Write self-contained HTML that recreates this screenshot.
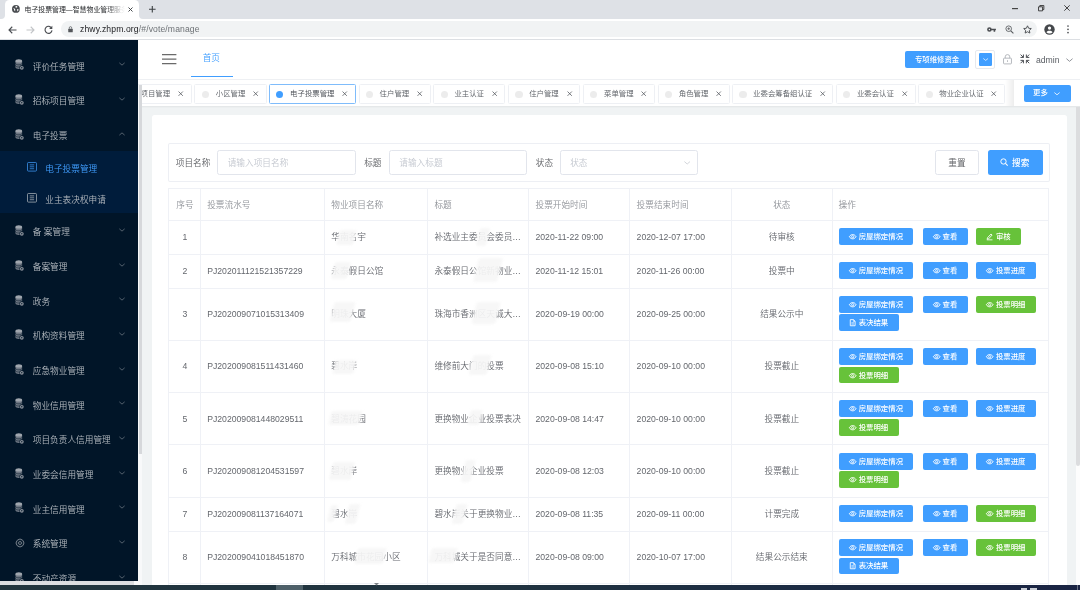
<!DOCTYPE html>
<html lang="zh-CN">
<head>
<meta charset="utf-8">
<title>电子投票管理—智慧物业管理服务平台</title>
<style>
*{box-sizing:border-box;margin:0;padding:0}
html,body{width:1080px;height:590px;overflow:hidden}
body{position:relative;background:#f0f3f4;font-family:"Liberation Sans","Noto Sans CJK SC",sans-serif;color:#606266;font-weight:350;-webkit-font-smoothing:antialiased}
#root{position:absolute;left:0;top:0;width:1080px;height:590px;will-change:transform}
.abs{position:absolute}
svg{display:block;overflow:visible}
/* ---------- browser chrome ---------- */
#tabstrip{position:absolute;left:0;top:0;width:1080px;height:19px;background:#dee1e6}
#tab{position:absolute;left:4.5px;top:0;width:134.5px;height:19px;background:#fff;border-radius:4.5px 4.5px 0 0}
#tab .title{position:absolute;left:20px;top:3.6px;width:100px;height:12px;font-size:6.9px;line-height:12px;color:#26282b;font-weight:400;white-space:nowrap;overflow:hidden}
#tab .fade{position:absolute;left:100px;top:2px;width:20px;height:15px;background:linear-gradient(90deg,rgba(255,255,255,0),#fff)}
#toolbar{position:absolute;left:0;top:18.5px;width:1080px;height:21px;background:#fff;border-bottom:1px solid #dcdfe3}
#omni{position:absolute;left:61px;top:2.6px;width:976px;height:16px;border-radius:8px;background:#f1f3f4}
#url{position:absolute;left:80px;top:3.5px;font-size:8.6px;line-height:14px;color:#202124;white-space:nowrap;letter-spacing:0.12px;font-weight:400}
#url span{color:#6d7175}
/* ---------- sidebar ---------- */
#side{position:absolute;left:0;top:39.5px;width:138.3px;height:541.7px;background:#011528;overflow:hidden}
#side .it{position:absolute;left:0;width:138.3px;height:34.65px;color:#b4bac0;font-size:8.66px;line-height:34.65px;white-space:nowrap}
#side .it .tx{position:absolute;left:32.8px;top:1.8px}
#side .it .ic{position:absolute;left:15.2px;top:11.5px;width:9.2px;height:11.4px}
#side .it .ar{position:absolute;left:119.2px;top:14.4px;width:6px;height:4px}
#side .sub{position:absolute;left:0;top:111.8px;width:138.3px;height:61.7px;background:#001c3b}
#side .si{position:absolute;left:0;width:138.3px;height:30.94px;line-height:30.94px;font-size:8.66px;color:#b4bac0;white-space:nowrap}
#side .si .tx{position:absolute;left:45.3px;top:2px}
#side .si .ic{position:absolute;left:27px;top:10.3px;width:10px;height:9.6px}
#side .si.on{color:#409eff}
/* ---------- header ---------- */
#head{position:absolute;left:138.3px;top:39.5px;width:941.7px;height:40.5px;background:#fff;border-bottom:1px solid #eef0f3}
#tags{position:absolute;left:138.3px;top:80px;width:941.7px;height:25.7px;background:#fff;overflow:hidden}
.tag{position:absolute;top:4.4px;height:19.2px;border:1px solid #eef0f4;border-radius:1.5px;background:#fff;font-size:7.4px;line-height:17.6px;color:#5c6066;white-space:nowrap}
.tag .dot{position:absolute;left:6.3px;top:5.4px;width:7.2px;height:7.2px;border-radius:50%;background:#ececec}
.tag .tx{position:absolute;left:20px;top:-0.6px}
.tag .x{position:absolute;right:7.3px;top:6.1px;width:5.4px;height:5.4px}
.tag.on{border-color:#7fbcfb;color:#4a4e55}
.tag.on .dot{background:#409eff}
.tag.on .tx{left:20.5px}
.btn{position:absolute;background:#409eff;color:#fff;border-radius:2px;white-space:nowrap;text-align:center;font-weight:500}

/* ---------- main ---------- */
#card{position:absolute;left:152.2px;top:115.2px;width:914.8px;height:480px;background:#fff;border-radius:2.5px}
#sbox{position:absolute;left:168px;top:143px;width:882px;height:39px;box-shadow:inset 0 0 0 1px #edeff4;border-radius:2px;background:#fff}
#sbox .lb{position:absolute;top:12.8px;font-size:8.66px;line-height:14px;color:#606266;white-space:nowrap}
#sbox .inp{position:absolute;top:6.8px;height:25.1px;border:1px solid #e2e5ec;border-radius:2.5px;background:#fff}
#sbox .inp span{position:absolute;left:9.4px;top:5.1px;font-size:8.66px;line-height:14px;color:#c4c8d0;white-space:nowrap}
#sbox .wbtn{position:absolute;top:6.8px;height:25.1px;border:1px solid #e2e5ec;border-radius:2.5px;background:#fff;font-size:8.66px;line-height:25px;text-align:center;color:#606266}
#sbox .sbtn{top:6.8px;height:25.1px;font-size:8.66px;line-height:26.2px;border-radius:2.5px;text-align:left}
#tbl{position:absolute;left:168.1px;top:187.3px;width:881px;height:400px;font-size:8.66px}
#tbl .vl{position:absolute;top:0.7px;width:1px;height:400px;background:#eff1f6}
#tbl .hl{position:absolute;left:0;width:881px;height:1px;background:#eff1f6}
#tbl .th{position:absolute;line-height:14px;color:#909399;white-space:nowrap}
#tbl .td{position:absolute;line-height:14px;color:#64676d;white-space:nowrap;overflow:hidden}
#tbl .c{text-align:center}
.ob{position:absolute;border-radius:2px;color:#fff;font-size:7.4px;white-space:nowrap;font-weight:500}
.ob.b{background:#409eff}
.ob.g{background:#67c23a}
.ob .oi{position:absolute;left:10px;top:4.9px;width:7.4px;height:7.4px}
.ob span{position:absolute;left:19.9px;top:0.9px}
#tbl .sm{position:absolute;background:rgba(246,246,246,0.93);filter:blur(0.9px);transform:skewX(-14deg);border-radius:2px}
#task{position:absolute;left:0;top:585px;width:1080px;height:5px;background:linear-gradient(90deg,#21353e 0%,#20333f 45%,#1b2a44 80%,#1a2443 100%)}
</style>
</head>
<body>
<div id="root">
<!-- ================= browser chrome ================= -->
<div id="tabstrip">
  <div class="abs" style="left:0;top:14.500px;width:4.500px;height:4.500px;background:#fff"></div><div class="abs" style="left:0;top:14.500px;width:4.500px;height:4.500px;background:#dee1e6;border-radius:0 0 4px 0"></div><div class="abs" style="left:139px;top:14.500px;width:4.500px;height:4.500px;background:#fff"></div><div class="abs" style="left:139px;top:14.500px;width:4.500px;height:4.500px;background:#dee1e6;border-radius:0 0 0 4px"></div>
  <div id="tab">
    <svg class="abs" style="left:7.1px;top:5.4px" width="7.8" height="7.8" viewBox="0 0 16 16"><circle cx="8" cy="8" r="8" fill="#4a4d51"/><path d="M2.2 6.2l3.2 1.2 1.4 2.2-.6 3.4-1.8-2.2-.4-2.4zM7.6 1.6l3 1 .4 2-2.4 1.2-1.6-1.4zM10.6 8.4l2.8.4-.8 3.4-1.8.6z" fill="#fff"/></svg>
    <div class="title">电子投票管理—智慧物业管理服务平台</div>
    <div class="fade"></div>
    <svg class="abs" style="left:123.4px;top:6.8px" width="5" height="5" viewBox="0 0 10 10"><path d="M1 1l8 8M9 1l-8 8" stroke="#3c4043" stroke-width="1.9" fill="none"/></svg>
  </div>
  <svg class="abs" style="left:148.6px;top:6px" width="6.6" height="6.6" viewBox="0 0 12 12"><path d="M6 0v12M0 6h12" stroke="#3c4043" stroke-width="2" fill="none"/></svg>
  <!-- window controls -->
  <svg class="abs" style="left:1011.5px;top:8px" width="6" height="1.2" viewBox="0 0 6 1.2"><rect width="6" height="1.2" fill="#444"/></svg>
  <svg class="abs" style="left:1038px;top:5.4px" width="6.4" height="6.4" viewBox="0 0 12 12"><path d="M1 3.4h7.6V11H1zM3.4 3.2V1H11v7.6H8.8" stroke="#333" stroke-width="1.7" fill="none"/></svg>
  <svg class="abs" style="left:1064px;top:5.4px" width="6" height="6" viewBox="0 0 10 10"><path d="M0.5 0.5l9 9M9.5 0.5l-9 9" stroke="#333" stroke-width="1.5" fill="none"/></svg>
</div>
<div id="toolbar">
  <!-- back / forward / reload -->
  <svg class="abs" style="left:7.8px;top:7px" width="9" height="8" viewBox="0 0 18 16"><path d="M17 8H2.5M8.5 1.5L2 8l6.5 6.5" stroke="#4b4e52" stroke-width="2.2" fill="none"/></svg>
  <svg class="abs" style="left:25.6px;top:7px" width="9" height="8" viewBox="0 0 18 16"><path d="M1 8h14.5M9.5 1.5L16 8l-6.5 6.5" stroke="#c3c5c8" stroke-width="2.2" fill="none"/></svg>
  <svg class="abs" style="left:44.2px;top:6.4px" width="9" height="9" viewBox="0 0 18 18"><path d="M15.2 6.2A7 7 0 1 0 16 10.6" stroke="#4b4e52" stroke-width="2.3" fill="none"/><path d="M16.6 1.4v6.4h-6.4z" fill="#4b4e52"/></svg>
  <div id="omni"></div>
  <svg class="abs" style="left:68.2px;top:7.2px" width="5" height="6.6" viewBox="0 0 10 13"><rect x="0.5" y="5.2" width="9" height="7.4" rx="1" fill="#54575b"/><path d="M2.6 5.4V3.6a2.4 2.4 0 0 1 4.8 0v1.8" stroke="#54575b" stroke-width="1.5" fill="none"/></svg>
  <div id="url">zhwy.zhpm.org<span>/#/vote/manage</span></div>
  <!-- right icons -->
  <svg class="abs" style="left:986.6px;top:8.2px" width="9" height="5" viewBox="0 0 18 10"><circle cx="4.800" cy="5" r="3" stroke="#4b4e52" stroke-width="3.200" fill="none"/><path d="M8 3.400h9.800v3.200H16.400v3h-3.200v-3H8z" fill="#4b4e52"/></svg>
  <svg class="abs" style="left:1004.6px;top:6.4px" width="9" height="9" viewBox="0 0 18 18"><circle cx="7.4" cy="7.4" r="5.6" stroke="#55585c" stroke-width="1.7" fill="none"/><path d="M11.6 11.6l5.2 5.2" stroke="#55585c" stroke-width="2.2"/><path d="M4.6 7.4h5.6M7.4 4.6v5.6" stroke="#55585c" stroke-width="1.5"/></svg>
  <svg class="abs" style="left:1022.6px;top:6.2px" width="9" height="9" viewBox="0 0 18 18"><path d="M9 1.6l2.3 4.9 5.3.6-3.9 3.7 1 5.3L9 13.5l-4.7 2.6 1-5.3L1.4 7.1l5.3-.6z" stroke="#4b4e52" stroke-width="1.9" fill="none" stroke-linejoin="round"/></svg>
  <svg class="abs" style="left:1044.4px;top:5.3px" width="11" height="11" viewBox="0 0 22 22"><circle cx="11" cy="11" r="10.400" fill="#45484c"/><circle cx="11" cy="8.200" r="3.300" fill="#fff"/><path d="M4.800 16.400c1.600-2.200 3.800-3 6.200-3s4.600.8 6.200 3A8 8 0 0 1 11 19.200a8 8 0 0 1-6.200-2.800z" fill="#fff"/></svg>
  <svg class="abs" style="left:1067px;top:6.6px" width="2" height="8.6" viewBox="0 0 2 8.6"><circle cx="1" cy="1" r="0.85" fill="#4b4e52"/><circle cx="1" cy="4.3" r="0.85" fill="#4b4e52"/><circle cx="1" cy="7.6" r="0.85" fill="#4b4e52"/></svg>
</div>

<!-- ================= sidebar ================= -->
<div id="side">
  <div class="it" style="top:8.4px"><svg class="ic" viewBox="0 0 17 21"><path d="M0.800 3.600v11.800c0 1.700 2.800 3 6.200 3s6.200-1.300 6.200-3V3.600z" fill="#6f7884"/><path d="M0.800 7.900c0 1.600 2.800 2.900 6.200 2.900s6.200-1.300 6.200-2.900M0.800 11.900c0 1.600 2.800 2.900 6.200 2.900s6.200-1.300 6.200-2.900" stroke="#011528" stroke-width="1" fill="none"/><ellipse cx="7" cy="3.600" rx="6.200" ry="3" fill="#a0a6ae"/><circle cx="12.600" cy="16.200" r="4.500" fill="#011528"/><circle cx="12.600" cy="16.200" r="3.500" fill="#8c939c"/><circle cx="12.600" cy="16.200" r="1.300" fill="#011528"/></svg><span class="tx">评价任务管理</span><svg class="ar" viewBox="0 0 10 5"><path d="M0.600 0.600L5 4.400 9.400 0.600" stroke="#7f8891" stroke-width="1.100" fill="none"/></svg></div>
  <div class="it" style="top:43.05px"><svg class="ic" viewBox="0 0 17 21"><path d="M0.800 3.600v11.800c0 1.700 2.800 3 6.200 3s6.200-1.300 6.200-3V3.600z" fill="#6f7884"/><path d="M0.800 7.900c0 1.600 2.800 2.900 6.200 2.900s6.200-1.300 6.200-2.900M0.800 11.900c0 1.600 2.800 2.900 6.200 2.900s6.200-1.300 6.200-2.900" stroke="#011528" stroke-width="1" fill="none"/><ellipse cx="7" cy="3.600" rx="6.200" ry="3" fill="#a0a6ae"/><circle cx="12.600" cy="16.200" r="4.500" fill="#011528"/><circle cx="12.600" cy="16.200" r="3.500" fill="#8c939c"/><circle cx="12.600" cy="16.200" r="1.300" fill="#011528"/></svg><span class="tx">招标项目管理</span><svg class="ar" viewBox="0 0 10 5"><path d="M0.600 0.600L5 4.400 9.400 0.600" stroke="#7f8891" stroke-width="1.100" fill="none"/></svg></div>
  <div class="it" style="top:77.7px"><svg class="ic" viewBox="0 0 17 21"><path d="M0.800 3.600v11.800c0 1.700 2.800 3 6.200 3s6.200-1.300 6.200-3V3.600z" fill="#6f7884"/><path d="M0.800 7.900c0 1.600 2.800 2.900 6.200 2.900s6.200-1.300 6.200-2.900M0.800 11.900c0 1.600 2.800 2.900 6.200 2.900s6.200-1.300 6.200-2.900" stroke="#011528" stroke-width="1" fill="none"/><ellipse cx="7" cy="3.600" rx="6.200" ry="3" fill="#a0a6ae"/><circle cx="12.600" cy="16.200" r="4.500" fill="#011528"/><circle cx="12.600" cy="16.200" r="3.500" fill="#8c939c"/><circle cx="12.600" cy="16.200" r="1.300" fill="#011528"/></svg><span class="tx">电子投票</span><svg class="ar" viewBox="0 0 10 5" style="transform:rotate(180deg)"><path d="M0.600 0.600L5 4.400 9.400 0.600" stroke="#7f8891" stroke-width="1.100" fill="none"/></svg></div>
  <div class="sub">
    <div class="si on" style="top:0.5px"><svg class="ic" viewBox="0 0 16 15.400"><rect x="0.800" y="0.800" width="14.400" height="13.800" rx="1.400" stroke="currentColor" stroke-width="1.150" fill="none"/><path d="M4.400 4.600h7M4.400 7.700h7M4.400 10.800h7" stroke="currentColor" stroke-width="1.100"/></svg><span class="tx">电子投票管理</span></div>
    <div class="si" style="top:31.44px"><svg class="ic" viewBox="0 0 16 15.400"><rect x="0.800" y="0.800" width="14.400" height="13.800" rx="1.400" stroke="currentColor" stroke-width="1.150" fill="none"/><path d="M4.400 4.600h7M4.400 7.700h7M4.400 10.800h7" stroke="currentColor" stroke-width="1.100"/></svg><span class="tx">业主表决权申请</span></div>
  </div>
  <div class="it" style="top:174.2px"><svg class="ic" viewBox="0 0 17 21"><path d="M0.800 3.600v11.800c0 1.700 2.800 3 6.200 3s6.200-1.300 6.200-3V3.600z" fill="#6f7884"/><path d="M0.800 7.900c0 1.600 2.800 2.900 6.200 2.900s6.200-1.300 6.200-2.900M0.800 11.900c0 1.600 2.800 2.900 6.200 2.900s6.200-1.300 6.200-2.900" stroke="#011528" stroke-width="1" fill="none"/><ellipse cx="7" cy="3.600" rx="6.200" ry="3" fill="#a0a6ae"/><circle cx="12.600" cy="16.200" r="4.500" fill="#011528"/><circle cx="12.600" cy="16.200" r="3.500" fill="#8c939c"/><circle cx="12.600" cy="16.200" r="1.300" fill="#011528"/></svg><span class="tx">备 案管理</span><svg class="ar" viewBox="0 0 10 5"><path d="M0.600 0.600L5 4.400 9.400 0.600" stroke="#7f8891" stroke-width="1.100" fill="none"/></svg></div>
  <div class="it" style="top:208.85px"><svg class="ic" viewBox="0 0 17 21"><path d="M0.800 3.600v11.800c0 1.700 2.800 3 6.200 3s6.200-1.300 6.200-3V3.600z" fill="#6f7884"/><path d="M0.800 7.900c0 1.600 2.800 2.900 6.200 2.900s6.200-1.300 6.200-2.900M0.800 11.900c0 1.600 2.800 2.900 6.200 2.900s6.200-1.300 6.200-2.900" stroke="#011528" stroke-width="1" fill="none"/><ellipse cx="7" cy="3.600" rx="6.200" ry="3" fill="#a0a6ae"/><circle cx="12.600" cy="16.200" r="4.500" fill="#011528"/><circle cx="12.600" cy="16.200" r="3.500" fill="#8c939c"/><circle cx="12.600" cy="16.200" r="1.300" fill="#011528"/></svg><span class="tx">备案管理</span><svg class="ar" viewBox="0 0 10 5"><path d="M0.600 0.600L5 4.400 9.400 0.600" stroke="#7f8891" stroke-width="1.100" fill="none"/></svg></div>
  <div class="it" style="top:243.5px"><svg class="ic" viewBox="0 0 17 21"><path d="M0.800 3.600v11.800c0 1.700 2.800 3 6.200 3s6.200-1.300 6.200-3V3.600z" fill="#6f7884"/><path d="M0.800 7.900c0 1.600 2.800 2.900 6.200 2.900s6.200-1.300 6.200-2.900M0.800 11.900c0 1.600 2.800 2.900 6.200 2.900s6.200-1.300 6.200-2.900" stroke="#011528" stroke-width="1" fill="none"/><ellipse cx="7" cy="3.600" rx="6.200" ry="3" fill="#a0a6ae"/><circle cx="12.600" cy="16.200" r="4.500" fill="#011528"/><circle cx="12.600" cy="16.200" r="3.500" fill="#8c939c"/><circle cx="12.600" cy="16.200" r="1.300" fill="#011528"/></svg><span class="tx">政务</span><svg class="ar" viewBox="0 0 10 5"><path d="M0.600 0.600L5 4.400 9.400 0.600" stroke="#7f8891" stroke-width="1.100" fill="none"/></svg></div>
  <div class="it" style="top:278.15px"><svg class="ic" viewBox="0 0 17 21"><path d="M0.800 3.600v11.800c0 1.700 2.800 3 6.200 3s6.200-1.300 6.200-3V3.600z" fill="#6f7884"/><path d="M0.800 7.900c0 1.600 2.800 2.900 6.200 2.900s6.200-1.300 6.200-2.900M0.800 11.900c0 1.600 2.800 2.900 6.200 2.900s6.200-1.300 6.200-2.900" stroke="#011528" stroke-width="1" fill="none"/><ellipse cx="7" cy="3.600" rx="6.200" ry="3" fill="#a0a6ae"/><circle cx="12.600" cy="16.200" r="4.500" fill="#011528"/><circle cx="12.600" cy="16.200" r="3.500" fill="#8c939c"/><circle cx="12.600" cy="16.200" r="1.300" fill="#011528"/></svg><span class="tx">机构资料管理</span><svg class="ar" viewBox="0 0 10 5"><path d="M0.600 0.600L5 4.400 9.400 0.600" stroke="#7f8891" stroke-width="1.100" fill="none"/></svg></div>
  <div class="it" style="top:312.8px"><svg class="ic" viewBox="0 0 17 21"><path d="M0.800 3.600v11.800c0 1.700 2.800 3 6.200 3s6.200-1.300 6.200-3V3.600z" fill="#6f7884"/><path d="M0.800 7.900c0 1.600 2.800 2.900 6.200 2.900s6.200-1.300 6.200-2.900M0.800 11.900c0 1.600 2.800 2.900 6.200 2.900s6.200-1.300 6.200-2.900" stroke="#011528" stroke-width="1" fill="none"/><ellipse cx="7" cy="3.600" rx="6.200" ry="3" fill="#a0a6ae"/><circle cx="12.600" cy="16.200" r="4.500" fill="#011528"/><circle cx="12.600" cy="16.200" r="3.500" fill="#8c939c"/><circle cx="12.600" cy="16.200" r="1.300" fill="#011528"/></svg><span class="tx">应急物业管理</span><svg class="ar" viewBox="0 0 10 5"><path d="M0.600 0.600L5 4.400 9.400 0.600" stroke="#7f8891" stroke-width="1.100" fill="none"/></svg></div>
  <div class="it" style="top:347.45px"><svg class="ic" viewBox="0 0 17 21"><path d="M0.800 3.600v11.800c0 1.700 2.800 3 6.200 3s6.200-1.300 6.200-3V3.600z" fill="#6f7884"/><path d="M0.800 7.900c0 1.600 2.800 2.900 6.200 2.900s6.200-1.300 6.200-2.900M0.800 11.900c0 1.600 2.800 2.900 6.200 2.900s6.200-1.300 6.200-2.900" stroke="#011528" stroke-width="1" fill="none"/><ellipse cx="7" cy="3.600" rx="6.200" ry="3" fill="#a0a6ae"/><circle cx="12.600" cy="16.200" r="4.500" fill="#011528"/><circle cx="12.600" cy="16.200" r="3.500" fill="#8c939c"/><circle cx="12.600" cy="16.200" r="1.300" fill="#011528"/></svg><span class="tx">物业信用管理</span><svg class="ar" viewBox="0 0 10 5"><path d="M0.600 0.600L5 4.400 9.400 0.600" stroke="#7f8891" stroke-width="1.100" fill="none"/></svg></div>
  <div class="it" style="top:382.1px"><svg class="ic" viewBox="0 0 17 21"><path d="M0.800 3.600v11.800c0 1.700 2.800 3 6.200 3s6.200-1.300 6.200-3V3.600z" fill="#6f7884"/><path d="M0.800 7.900c0 1.600 2.800 2.900 6.200 2.900s6.200-1.300 6.200-2.900M0.800 11.900c0 1.600 2.800 2.900 6.200 2.900s6.200-1.300 6.200-2.900" stroke="#011528" stroke-width="1" fill="none"/><ellipse cx="7" cy="3.600" rx="6.200" ry="3" fill="#a0a6ae"/><circle cx="12.600" cy="16.200" r="4.500" fill="#011528"/><circle cx="12.600" cy="16.200" r="3.500" fill="#8c939c"/><circle cx="12.600" cy="16.200" r="1.300" fill="#011528"/></svg><span class="tx">项目负责人信用管理</span><svg class="ar" viewBox="0 0 10 5"><path d="M0.600 0.600L5 4.400 9.400 0.600" stroke="#7f8891" stroke-width="1.100" fill="none"/></svg></div>
  <div class="it" style="top:416.75px"><svg class="ic" viewBox="0 0 17 21"><path d="M0.800 3.600v11.800c0 1.700 2.800 3 6.200 3s6.200-1.300 6.200-3V3.600z" fill="#6f7884"/><path d="M0.800 7.900c0 1.600 2.800 2.900 6.200 2.900s6.200-1.300 6.200-2.900M0.800 11.900c0 1.600 2.800 2.900 6.200 2.900s6.200-1.300 6.200-2.900" stroke="#011528" stroke-width="1" fill="none"/><ellipse cx="7" cy="3.600" rx="6.200" ry="3" fill="#a0a6ae"/><circle cx="12.600" cy="16.200" r="4.500" fill="#011528"/><circle cx="12.600" cy="16.200" r="3.500" fill="#8c939c"/><circle cx="12.600" cy="16.200" r="1.300" fill="#011528"/></svg><span class="tx">业委会信用管理</span><svg class="ar" viewBox="0 0 10 5"><path d="M0.600 0.600L5 4.400 9.400 0.600" stroke="#7f8891" stroke-width="1.100" fill="none"/></svg></div>
  <div class="it" style="top:451.4px"><svg class="ic" viewBox="0 0 17 21"><path d="M0.800 3.600v11.800c0 1.700 2.800 3 6.200 3s6.200-1.300 6.200-3V3.600z" fill="#6f7884"/><path d="M0.800 7.900c0 1.600 2.800 2.900 6.200 2.900s6.200-1.300 6.200-2.900M0.800 11.900c0 1.600 2.800 2.900 6.200 2.900s6.200-1.300 6.200-2.900" stroke="#011528" stroke-width="1" fill="none"/><ellipse cx="7" cy="3.600" rx="6.200" ry="3" fill="#a0a6ae"/><circle cx="12.600" cy="16.200" r="4.500" fill="#011528"/><circle cx="12.600" cy="16.200" r="3.500" fill="#8c939c"/><circle cx="12.600" cy="16.200" r="1.300" fill="#011528"/></svg><span class="tx">业主信用管理</span><svg class="ar" viewBox="0 0 10 5"><path d="M0.600 0.600L5 4.400 9.400 0.600" stroke="#7f8891" stroke-width="1.100" fill="none"/></svg></div>
  <div class="it" style="top:486.05px"><svg class="ic" viewBox="0 0 18 18" style="top:12.400px;left:15px;width:10px;height:10px"><circle cx="9" cy="9" r="2.700" stroke="#8f979f" stroke-width="1.400" fill="none"/><path d="M9 1.200l1.300 2 2.300-.6.600 2.300 2.300.6-.600 2.300 1.900 1.200-1.900 1.200.600 2.300-2.300.600-.600 2.300-2.300-.600-1.300 2-1.300-2-2.300.600-.600-2.300-2.300-.600.600-2.300L1.200 9l1.900-1.200-.600-2.300 2.300-.600.600-2.300 2.300.600z" stroke="#8f979f" stroke-width="1.300" fill="none" stroke-linejoin="round"/></svg><span class="tx">系统管理</span><svg class="ar" viewBox="0 0 10 5"><path d="M0.600 0.600L5 4.400 9.400 0.600" stroke="#7f8891" stroke-width="1.100" fill="none"/></svg></div>
  <div class="it" style="top:520.7px"><svg class="ic" viewBox="0 0 17 21"><path d="M0.800 3.600v11.800c0 1.700 2.800 3 6.200 3s6.200-1.300 6.200-3V3.600z" fill="#6f7884"/><path d="M0.800 7.900c0 1.600 2.800 2.900 6.200 2.900s6.200-1.300 6.200-2.900M0.800 11.900c0 1.600 2.800 2.900 6.200 2.900s6.200-1.300 6.200-2.900" stroke="#011528" stroke-width="1" fill="none"/><ellipse cx="7" cy="3.600" rx="6.200" ry="3" fill="#a0a6ae"/><circle cx="12.600" cy="16.200" r="4.500" fill="#011528"/><circle cx="12.600" cy="16.200" r="3.500" fill="#8c939c"/><circle cx="12.600" cy="16.200" r="1.300" fill="#011528"/></svg><span class="tx">不动产资源</span><svg class="ar" viewBox="0 0 10 5"><path d="M0.600 0.600L5 4.400 9.400 0.600" stroke="#7f8891" stroke-width="1.100" fill="none"/></svg></div>
</div>
<!-- sidebar scrollbar + bottom strip -->
<div class="abs" style="left:138.3px;top:85px;width:3.5px;height:497px;background:#f8f9fa;z-index:5"></div><div class="abs" style="left:138.5px;top:85px;width:3.3px;height:368.7px;background:#d6d8db;z-index:6"></div>
<div class="abs" style="left:0;top:581.200px;width:134px;height:3.800px;background:#dcdee1"></div><div class="abs" style="left:134px;top:581.200px;width:7.800px;height:3.800px;background:#f8f9fa"></div>

<!-- ================= header ================= -->
<div id="head">
  <svg class="abs" style="left:24px;top:14.300px" width="14.400" height="10.400" viewBox="0 0 14.400 10.400"><path d="M0 0.700h14.400M0 5.200h14.400M0 9.700h14.400" stroke="#6a6a6a" stroke-width="1.300"/></svg>
  <div class="abs" style="left:64.400px;top:11.300px;font-size:8.660px;line-height:14px;color:#409eff;white-space:nowrap">首页</div>
  <div class="abs" style="left:52.500px;top:36.200px;width:42.200px;height:1.300px;background:#409eff"></div>
  <div class="btn" style="left:766.700px;top:11.500px;width:64.200px;height:17.200px;font-size:7.400px;line-height:18px">专项维修资金</div>
  <div class="abs" style="left:837.200px;top:10.800px;width:19.200px;height:19px;border:1px solid #e6e9ee;border-radius:2px;background:#fff"></div>
  <div class="btn" style="left:840.700px;top:13.600px;width:13px;height:13px;border-radius:1.200px"><svg class="abs" style="left:3.800px;top:5px" width="5.400" height="3" viewBox="0 0 10 5"><path d="M0.600 0.600L5 4.200 9.400 0.600" stroke="#fff" stroke-width="1.300" fill="none"/></svg></div>
  <!-- lock -->
  <svg class="abs" style="left:864.300px;top:14.400px" width="9" height="10.400" viewBox="0 0 18 21"><rect x="1" y="8.400" width="16" height="11.600" rx="1.600" stroke="#a9adb3" stroke-width="1.700" fill="none"/><path d="M4.400 8.400V5.800a4.600 4.600 0 0 1 9.200 0v2.600" stroke="#a9adb3" stroke-width="1.700" fill="none"/><path d="M9 12.600v3.400" stroke="#a9adb3" stroke-width="1.700"/></svg>
  <!-- fullscreen-exit -->
  <svg class="abs" style="left:881.300px;top:14.600px" width="9.800" height="9.800" viewBox="0 0 20 20"><path d="M1 7h6V1M7 7L1.200 1.200M19 7h-6V1M13 7l5.800-5.800M1 13h6v6M7 13l-5.800 5.800M19 13h-6v6M13 13l5.800 5.800" stroke="#4a4d52" stroke-width="2" fill="none"/></svg>
  <div class="abs" style="left:897.600px;top:13.400px;font-size:8.660px;line-height:14px;color:#5c6066;white-space:nowrap">admin</div>
  <svg class="abs" style="left:927.600px;top:18.700px" width="7" height="4" viewBox="0 0 10 5"><path d="M0.600 0.600L5 4.400 9.400 0.600" stroke="#7d8188" stroke-width="1.200" fill="none"/></svg>
</div>

<!-- ================= tag bar ================= -->
<div id="tags">
  <div class="tag" style="left:-19.2px;width:72.400px"><span class="dot"></span><span class="tx" style="left:20.400px">项目管理</span><svg class="x" viewBox="0 0 10 10"><path d="M1 1l8 8M9 1l-8 8" stroke="#5a5e64" stroke-width="1.500" fill="none"/></svg></div>
  <div class="tag" style="left:56.1px;width:72.400px"><span class="dot"></span><span class="tx" style="left:20.400px">小区管理</span><svg class="x" viewBox="0 0 10 10"><path d="M1 1l8 8M9 1l-8 8" stroke="#5a5e64" stroke-width="1.500" fill="none"/></svg></div>
  <div class="tag on" style="left:130.3px;width:87.3px"><span class="dot"></span><span class="tx">电子投票管理</span><svg class="x" viewBox="0 0 10 10"><path d="M1 1l8 8M9 1l-8 8" stroke="#5a5e64" stroke-width="1.500" fill="none"/></svg></div>
  <div class="tag" style="left:220.3px;width:72.0px"><span class="dot"></span><span class="tx">住户管理</span><svg class="x" viewBox="0 0 10 10"><path d="M1 1l8 8M9 1l-8 8" stroke="#5a5e64" stroke-width="1.500" fill="none"/></svg></div>
  <div class="tag" style="left:295.1px;width:72.0px"><span class="dot"></span><span class="tx">业主认证</span><svg class="x" viewBox="0 0 10 10"><path d="M1 1l8 8M9 1l-8 8" stroke="#5a5e64" stroke-width="1.500" fill="none"/></svg></div>
  <div class="tag" style="left:369.9px;width:72.0px"><span class="dot"></span><span class="tx">住户管理</span><svg class="x" viewBox="0 0 10 10"><path d="M1 1l8 8M9 1l-8 8" stroke="#5a5e64" stroke-width="1.500" fill="none"/></svg></div>
  <div class="tag" style="left:444.7px;width:72.0px"><span class="dot"></span><span class="tx">菜单管理</span><svg class="x" viewBox="0 0 10 10"><path d="M1 1l8 8M9 1l-8 8" stroke="#5a5e64" stroke-width="1.500" fill="none"/></svg></div>
  <div class="tag" style="left:519.5px;width:72.0px"><span class="dot"></span><span class="tx">角色管理</span><svg class="x" viewBox="0 0 10 10"><path d="M1 1l8 8M9 1l-8 8" stroke="#5a5e64" stroke-width="1.500" fill="none"/></svg></div>
  <div class="tag" style="left:593.8px;width:101.4px"><span class="dot"></span><span class="tx">业委会筹备组认证</span><svg class="x" viewBox="0 0 10 10"><path d="M1 1l8 8M9 1l-8 8" stroke="#5a5e64" stroke-width="1.500" fill="none"/></svg></div>
  <div class="tag" style="left:697.6px;width:79.8px"><span class="dot"></span><span class="tx">业委会认证</span><svg class="x" viewBox="0 0 10 10"><path d="M1 1l8 8M9 1l-8 8" stroke="#5a5e64" stroke-width="1.500" fill="none"/></svg></div>
  <div class="tag" style="left:780px;width:86.3px"><span class="dot"></span><span class="tx">物业企业认证</span><svg class="x" viewBox="0 0 10 10"><path d="M1 1l8 8M9 1l-8 8" stroke="#5a5e64" stroke-width="1.500" fill="none"/></svg></div>
  <div class="abs" style="left:867px;top:0;width:9px;height:25.700px;background:linear-gradient(90deg,rgba(255,255,255,0),rgba(0,0,0,0.070))"></div>
  <div class="abs" style="left:875.500px;top:0;width:70px;height:25.700px;background:#fff"></div>
  <div class="btn" style="left:885.600px;top:5px;width:47px;height:17px;font-size:7.400px;line-height:16.400px;text-align:left;padding-left:9.200px">更多<svg class="abs" style="left:30.400px;top:6.800px" width="6" height="3.400" viewBox="0 0 10 5"><path d="M0.600 0.600L5 4.400 9.400 0.600" stroke="#fff" stroke-width="1.300" fill="none"/></svg></div>
</div>
<div class="abs" style="left:141.500px;top:105.700px;width:938.500px;height:2.400px;background:linear-gradient(180deg,rgba(0,0,0,0.060),rgba(0,0,0,0))"></div>
<!--MAIN-->
<div id="card"></div>
<div id="sbox">
<div class="lb" style="left:7.8px">项目名称</div><div class="inp" style="left:49.3px;width:138.8px"><span>请输入项目名称</span></div>
<div class="lb" style="left:196.2px">标题</div><div class="inp" style="left:220.9px;width:138px"><span>请输入标题</span></div>
<div class="lb" style="left:367.8px">状态</div><div class="inp" style="left:391.8px;width:138.5px"><span>状态</span><svg class="abs" style="left:123.4px;top:10.2px" width="6.4" height="3.6" viewBox="0 0 10 5"><path d="M0.6 0.6L5 4.4 9.4 0.6" stroke="#c0c4cc" stroke-width="1.1" fill="none"/></svg></div>
<div class="wbtn" style="left:766.8px;width:44.3px">重置</div>
<div class="btn sbtn" style="left:819.8px;width:55px"><svg class="abs" style="left:12.6px;top:8.6px" width="8.2" height="8.2" viewBox="0 0 16 16"><circle cx="6.8" cy="6.8" r="5.2" stroke="#fff" stroke-width="1.9" fill="none"/><path d="M10.6 10.6l4.4 4.4" stroke="#fff" stroke-width="2"/></svg><span class="abs" style="left:24.2px;top:0">搜索</span></div>
</div>
<div id="tbl">
<i class="vl" style="left:-0.1px"></i>
<i class="vl" style="left:31.9px"></i>
<i class="vl" style="left:155.9px"></i>
<i class="vl" style="left:258.9px"></i>
<i class="vl" style="left:359.9px"></i>
<i class="vl" style="left:460.9px"></i>
<i class="vl" style="left:562.9px"></i>
<i class="vl" style="left:663.9px"></i>
<i class="vl" style="left:879.9px"></i>
<i class="hl" style="top:0.7px"></i>
<i class="hl" style="top:32.7px"></i>
<i class="hl" style="top:66.7px"></i>
<i class="hl" style="top:100.7px"></i>
<i class="hl" style="top:152.7px"></i>
<i class="hl" style="top:204.7px"></i>
<i class="hl" style="top:256.7px"></i>
<i class="hl" style="top:309.7px"></i>
<i class="hl" style="top:343.7px"></i>
<i class="hl" style="top:395.7px"></i>
<div class="th c" style="left:1.1px;width:31.7px;top:10.45px">序号</div>
<div class="th" style="left:39.1px;top:10.45px">投票流水号</div>
<div class="th" style="left:163.2px;top:10.45px">物业项目名称</div>
<div class="th" style="left:266.3px;top:10.45px">标题</div>
<div class="th" style="left:367.4px;top:10.45px">投票开始时间</div>
<div class="th" style="left:468.5px;top:10.45px">投票结束时间</div>
<div class="th c" style="left:563px;width:101.4px;top:10.45px">状态</div>
<div class="th" style="left:670.5px;top:10.45px">操作</div>
<div class="td c" style="left:1.1px;width:31.7px;top:42.8px">1</div>
<div class="td" style="left:163.2px;top:42.8px;max-width:95.1px">华南名宇</div>
<div class="td" style="left:266.3px;top:42.8px;max-width:93.1px">补选业主委员会委员…</div>
<div class="td" style="left:367.4px;top:42.8px;max-width:93.1px">2020-11-22 09:00</div>
<div class="td" style="left:468.5px;top:42.8px;max-width:93.4px">2020-12-07 17:00</div>
<div class="td c" style="left:563px;width:101.4px;top:42.8px">待审核</div>
<div class="ob b" style="left:670.7px;top:40.9px;width:74.5px;height:17px;line-height:16.6px"><svg class="oi" viewBox="0 0 16 16"><path d="M0.8 8C2.6 4.8 5.200 3.400 8 3.400s5.400 1.400 7.200 4.600c-1.800 3.200-4.400 4.600-7.200 4.600S2.600 11.200 0.800 8z" stroke="#fff" stroke-width="2.100" fill="none"/><circle cx="8" cy="8" r="2.400" stroke="#fff" stroke-width="1.900" fill="none"/></svg><span>房屋绑定情况</span></div>
<div class="ob b" style="left:754.5px;top:40.9px;width:45px;height:17px;line-height:16.6px"><svg class="oi" viewBox="0 0 16 16"><path d="M0.8 8C2.6 4.8 5.200 3.400 8 3.400s5.400 1.400 7.200 4.600c-1.800 3.200-4.400 4.600-7.200 4.600S2.600 11.200 0.800 8z" stroke="#fff" stroke-width="2.100" fill="none"/><circle cx="8" cy="8" r="2.400" stroke="#fff" stroke-width="1.900" fill="none"/></svg><span>查看</span></div>
<div class="ob g" style="left:807.9px;top:40.9px;width:45.4px;height:17px;line-height:16.6px"><svg class="oi" viewBox="0 0 16 16"><path d="M3.200 10.400L10.800 2.200l2.400 2.200-7.600 8.200-3 .8z" stroke="#fff" stroke-width="1.900" fill="none" stroke-linejoin="round"/><path d="M1.600 14.800h12.400" stroke="#fff" stroke-width="1.800"/></svg><span>审核</span></div>
<div class="td c" style="left:1.1px;width:31.7px;top:76.75px">2</div>
<div class="td" style="left:39.1px;top:76.75px;max-width:116.1px">PJ202011121521357229</div>
<div class="td" style="left:163.2px;top:76.75px;max-width:95.1px">永泰假日公馆</div>
<div class="td" style="left:266.3px;top:76.75px;max-width:93.1px">永泰假日公馆新物业…</div>
<div class="td" style="left:367.4px;top:76.75px;max-width:93.1px">2020-11-12 15:01</div>
<div class="td" style="left:468.5px;top:76.75px;max-width:93.4px">2020-11-26 00:00</div>
<div class="td c" style="left:563px;width:101.4px;top:76.75px">投票中</div>
<div class="ob b" style="left:670.7px;top:74.9px;width:74.5px;height:17px;line-height:16.6px"><svg class="oi" viewBox="0 0 16 16"><path d="M0.8 8C2.6 4.8 5.200 3.400 8 3.400s5.400 1.400 7.200 4.600c-1.800 3.200-4.400 4.600-7.200 4.600S2.600 11.200 0.800 8z" stroke="#fff" stroke-width="2.100" fill="none"/><circle cx="8" cy="8" r="2.400" stroke="#fff" stroke-width="1.900" fill="none"/></svg><span>房屋绑定情况</span></div>
<div class="ob b" style="left:754.5px;top:74.9px;width:45px;height:17px;line-height:16.6px"><svg class="oi" viewBox="0 0 16 16"><path d="M0.8 8C2.6 4.8 5.200 3.400 8 3.400s5.400 1.400 7.200 4.600c-1.800 3.200-4.400 4.600-7.200 4.600S2.600 11.200 0.800 8z" stroke="#fff" stroke-width="2.100" fill="none"/><circle cx="8" cy="8" r="2.400" stroke="#fff" stroke-width="1.900" fill="none"/></svg><span>查看</span></div>
<div class="ob b" style="left:807.9px;top:74.9px;width:59.9px;height:17px;line-height:16.6px"><svg class="oi" viewBox="0 0 16 16"><path d="M0.8 8C2.6 4.8 5.200 3.400 8 3.400s5.400 1.400 7.200 4.600c-1.800 3.200-4.400 4.600-7.200 4.600S2.600 11.200 0.800 8z" stroke="#fff" stroke-width="2.100" fill="none"/><circle cx="8" cy="8" r="2.400" stroke="#fff" stroke-width="1.900" fill="none"/></svg><span>投票进度</span></div>
<div class="td c" style="left:1.1px;width:31.7px;top:119.85px">3</div>
<div class="td" style="left:39.1px;top:119.85px;max-width:116.1px">PJ202009071015313409</div>
<div class="td" style="left:163.2px;top:119.85px;max-width:95.1px">明珠大厦</div>
<div class="td" style="left:266.3px;top:119.85px;max-width:93.1px">珠海市香洲区天诚大…</div>
<div class="td" style="left:367.4px;top:119.85px;max-width:93.1px">2020-09-19 00:00</div>
<div class="td" style="left:468.5px;top:119.85px;max-width:93.4px">2020-09-25 00:00</div>
<div class="td c" style="left:563px;width:101.4px;top:119.85px">结果公示中</div>
<div class="ob b" style="left:670.7px;top:108.5px;width:74.5px;height:17px;line-height:16.6px"><svg class="oi" viewBox="0 0 16 16"><path d="M0.8 8C2.6 4.8 5.200 3.400 8 3.400s5.400 1.400 7.200 4.600c-1.800 3.200-4.400 4.600-7.200 4.600S2.600 11.200 0.800 8z" stroke="#fff" stroke-width="2.100" fill="none"/><circle cx="8" cy="8" r="2.400" stroke="#fff" stroke-width="1.900" fill="none"/></svg><span>房屋绑定情况</span></div>
<div class="ob b" style="left:754.5px;top:108.5px;width:45px;height:17px;line-height:16.6px"><svg class="oi" viewBox="0 0 16 16"><path d="M0.8 8C2.6 4.8 5.200 3.400 8 3.400s5.400 1.400 7.200 4.600c-1.800 3.200-4.400 4.600-7.200 4.600S2.600 11.200 0.800 8z" stroke="#fff" stroke-width="2.100" fill="none"/><circle cx="8" cy="8" r="2.400" stroke="#fff" stroke-width="1.900" fill="none"/></svg><span>查看</span></div>
<div class="ob g" style="left:807.9px;top:108.5px;width:59.9px;height:17px;line-height:16.6px"><svg class="oi" viewBox="0 0 16 16"><path d="M0.8 8C2.6 4.8 5.200 3.400 8 3.400s5.400 1.400 7.200 4.600c-1.800 3.200-4.400 4.600-7.200 4.600S2.600 11.200 0.800 8z" stroke="#fff" stroke-width="2.100" fill="none"/><circle cx="8" cy="8" r="2.400" stroke="#fff" stroke-width="1.900" fill="none"/></svg><span>投票明细</span></div>
<div class="ob b" style="left:670.7px;top:127.1px;width:60px;height:16.6px;line-height:16.2px"><svg class="oi" viewBox="0 0 16 16"><path d="M2.800 1.400h7l3.400 3.400v9.800H2.800z" stroke="#fff" stroke-width="1.900" fill="none" stroke-linejoin="round"/><path d="M9.600 1.600v3.600h3.400M5.200 8.200h5.600M5.200 11h5.600" stroke="#fff" stroke-width="1.500" fill="none"/></svg><span>表决结果</span></div>
<div class="td c" style="left:1.1px;width:31.7px;top:172.15px">4</div>
<div class="td" style="left:39.1px;top:172.15px;max-width:116.1px">PJ202009081511431460</div>
<div class="td" style="left:163.2px;top:172.15px;max-width:95.1px">碧水岸</div>
<div class="td" style="left:266.3px;top:172.15px;max-width:93.1px">维修前大门的投票</div>
<div class="td" style="left:367.4px;top:172.15px;max-width:93.1px">2020-09-08 15:10</div>
<div class="td" style="left:468.5px;top:172.15px;max-width:93.4px">2020-09-10 00:00</div>
<div class="td c" style="left:563px;width:101.4px;top:172.15px">投票截止</div>
<div class="ob b" style="left:670.7px;top:160.8px;width:74.5px;height:17px;line-height:16.6px"><svg class="oi" viewBox="0 0 16 16"><path d="M0.8 8C2.6 4.8 5.200 3.400 8 3.400s5.400 1.400 7.200 4.600c-1.800 3.200-4.400 4.600-7.200 4.600S2.600 11.200 0.800 8z" stroke="#fff" stroke-width="2.100" fill="none"/><circle cx="8" cy="8" r="2.400" stroke="#fff" stroke-width="1.900" fill="none"/></svg><span>房屋绑定情况</span></div>
<div class="ob b" style="left:754.5px;top:160.8px;width:45px;height:17px;line-height:16.6px"><svg class="oi" viewBox="0 0 16 16"><path d="M0.8 8C2.6 4.8 5.200 3.400 8 3.400s5.400 1.400 7.200 4.600c-1.800 3.200-4.400 4.600-7.200 4.600S2.600 11.200 0.800 8z" stroke="#fff" stroke-width="2.100" fill="none"/><circle cx="8" cy="8" r="2.400" stroke="#fff" stroke-width="1.900" fill="none"/></svg><span>查看</span></div>
<div class="ob b" style="left:807.9px;top:160.8px;width:59.9px;height:17px;line-height:16.6px"><svg class="oi" viewBox="0 0 16 16"><path d="M0.8 8C2.6 4.8 5.200 3.400 8 3.400s5.400 1.400 7.200 4.600c-1.800 3.200-4.400 4.600-7.200 4.600S2.600 11.200 0.800 8z" stroke="#fff" stroke-width="2.100" fill="none"/><circle cx="8" cy="8" r="2.400" stroke="#fff" stroke-width="1.900" fill="none"/></svg><span>投票进度</span></div>
<div class="ob g" style="left:670.7px;top:179.4px;width:59.9px;height:16.6px;line-height:16.2px"><svg class="oi" viewBox="0 0 16 16"><path d="M0.8 8C2.6 4.8 5.200 3.400 8 3.400s5.400 1.400 7.200 4.600c-1.800 3.200-4.400 4.600-7.200 4.600S2.600 11.200 0.800 8z" stroke="#fff" stroke-width="2.100" fill="none"/><circle cx="8" cy="8" r="2.400" stroke="#fff" stroke-width="1.900" fill="none"/></svg><span>投票明细</span></div>
<div class="td c" style="left:1.1px;width:31.7px;top:224.45px">5</div>
<div class="td" style="left:39.1px;top:224.45px;max-width:116.1px">PJ202009081448029511</div>
<div class="td" style="left:163.2px;top:224.45px;max-width:95.1px">碧涛花园</div>
<div class="td" style="left:266.3px;top:224.45px;max-width:93.1px">更换物业企业投票表决</div>
<div class="td" style="left:367.4px;top:224.45px;max-width:93.1px">2020-09-08 14:47</div>
<div class="td" style="left:468.5px;top:224.45px;max-width:93.4px">2020-09-10 00:00</div>
<div class="td c" style="left:563px;width:101.4px;top:224.45px">投票截止</div>
<div class="ob b" style="left:670.7px;top:213.1px;width:74.5px;height:17px;line-height:16.6px"><svg class="oi" viewBox="0 0 16 16"><path d="M0.8 8C2.6 4.8 5.200 3.400 8 3.400s5.400 1.400 7.200 4.600c-1.800 3.200-4.400 4.600-7.200 4.600S2.600 11.200 0.800 8z" stroke="#fff" stroke-width="2.100" fill="none"/><circle cx="8" cy="8" r="2.400" stroke="#fff" stroke-width="1.900" fill="none"/></svg><span>房屋绑定情况</span></div>
<div class="ob b" style="left:754.5px;top:213.1px;width:45px;height:17px;line-height:16.6px"><svg class="oi" viewBox="0 0 16 16"><path d="M0.8 8C2.6 4.8 5.200 3.400 8 3.400s5.400 1.400 7.200 4.600c-1.800 3.200-4.400 4.600-7.200 4.600S2.600 11.200 0.800 8z" stroke="#fff" stroke-width="2.100" fill="none"/><circle cx="8" cy="8" r="2.400" stroke="#fff" stroke-width="1.900" fill="none"/></svg><span>查看</span></div>
<div class="ob b" style="left:807.9px;top:213.1px;width:59.9px;height:17px;line-height:16.6px"><svg class="oi" viewBox="0 0 16 16"><path d="M0.8 8C2.6 4.8 5.200 3.400 8 3.400s5.400 1.400 7.200 4.600c-1.800 3.200-4.400 4.600-7.200 4.600S2.600 11.200 0.800 8z" stroke="#fff" stroke-width="2.100" fill="none"/><circle cx="8" cy="8" r="2.400" stroke="#fff" stroke-width="1.900" fill="none"/></svg><span>投票进度</span></div>
<div class="ob g" style="left:670.7px;top:231.7px;width:59.9px;height:16.6px;line-height:16.2px"><svg class="oi" viewBox="0 0 16 16"><path d="M0.8 8C2.6 4.8 5.200 3.400 8 3.400s5.400 1.400 7.200 4.600c-1.800 3.200-4.400 4.600-7.200 4.600S2.600 11.200 0.800 8z" stroke="#fff" stroke-width="2.100" fill="none"/><circle cx="8" cy="8" r="2.400" stroke="#fff" stroke-width="1.900" fill="none"/></svg><span>投票明细</span></div>
<div class="td c" style="left:1.1px;width:31.7px;top:276.75px">6</div>
<div class="td" style="left:39.1px;top:276.75px;max-width:116.1px">PJ202009081204531597</div>
<div class="td" style="left:163.2px;top:276.75px;max-width:95.1px">碧水岸</div>
<div class="td" style="left:266.3px;top:276.75px;max-width:93.1px">更换物业企业投票</div>
<div class="td" style="left:367.4px;top:276.75px;max-width:93.1px">2020-09-08 12:03</div>
<div class="td" style="left:468.5px;top:276.75px;max-width:93.4px">2020-09-10 00:00</div>
<div class="td c" style="left:563px;width:101.4px;top:276.75px">投票截止</div>
<div class="ob b" style="left:670.7px;top:265.4px;width:74.5px;height:17px;line-height:16.6px"><svg class="oi" viewBox="0 0 16 16"><path d="M0.8 8C2.6 4.8 5.200 3.400 8 3.400s5.400 1.400 7.200 4.600c-1.800 3.200-4.400 4.600-7.200 4.600S2.600 11.200 0.800 8z" stroke="#fff" stroke-width="2.100" fill="none"/><circle cx="8" cy="8" r="2.400" stroke="#fff" stroke-width="1.900" fill="none"/></svg><span>房屋绑定情况</span></div>
<div class="ob b" style="left:754.5px;top:265.4px;width:45px;height:17px;line-height:16.6px"><svg class="oi" viewBox="0 0 16 16"><path d="M0.8 8C2.6 4.8 5.200 3.400 8 3.400s5.400 1.400 7.200 4.600c-1.800 3.200-4.400 4.600-7.200 4.600S2.600 11.200 0.800 8z" stroke="#fff" stroke-width="2.100" fill="none"/><circle cx="8" cy="8" r="2.400" stroke="#fff" stroke-width="1.900" fill="none"/></svg><span>查看</span></div>
<div class="ob b" style="left:807.9px;top:265.4px;width:59.9px;height:17px;line-height:16.6px"><svg class="oi" viewBox="0 0 16 16"><path d="M0.8 8C2.6 4.8 5.200 3.400 8 3.400s5.400 1.400 7.200 4.600c-1.800 3.200-4.400 4.600-7.200 4.600S2.600 11.200 0.800 8z" stroke="#fff" stroke-width="2.100" fill="none"/><circle cx="8" cy="8" r="2.400" stroke="#fff" stroke-width="1.900" fill="none"/></svg><span>投票进度</span></div>
<div class="ob g" style="left:670.7px;top:284px;width:59.9px;height:16.6px;line-height:16.2px"><svg class="oi" viewBox="0 0 16 16"><path d="M0.8 8C2.6 4.8 5.200 3.400 8 3.400s5.400 1.400 7.200 4.600c-1.800 3.200-4.400 4.600-7.200 4.600S2.600 11.200 0.800 8z" stroke="#fff" stroke-width="2.100" fill="none"/><circle cx="8" cy="8" r="2.400" stroke="#fff" stroke-width="1.900" fill="none"/></svg><span>投票明细</span></div>
<div class="td c" style="left:1.1px;width:31.7px;top:319.9px">7</div>
<div class="td" style="left:39.1px;top:319.9px;max-width:116.1px">PJ202009081137164071</div>
<div class="td" style="left:163.2px;top:319.9px;max-width:95.1px">碧水岸</div>
<div class="td" style="left:266.3px;top:319.9px;max-width:93.1px">碧水岸关于更换物业…</div>
<div class="td" style="left:367.4px;top:319.9px;max-width:93.1px">2020-09-08 11:35</div>
<div class="td" style="left:468.5px;top:319.9px;max-width:93.4px">2020-09-11 00:00</div>
<div class="td c" style="left:563px;width:101.4px;top:319.9px">计票完成</div>
<div class="ob b" style="left:670.7px;top:318px;width:74.5px;height:17px;line-height:16.6px"><svg class="oi" viewBox="0 0 16 16"><path d="M0.8 8C2.6 4.8 5.200 3.400 8 3.400s5.400 1.400 7.200 4.600c-1.800 3.200-4.400 4.600-7.200 4.600S2.600 11.200 0.800 8z" stroke="#fff" stroke-width="2.100" fill="none"/><circle cx="8" cy="8" r="2.400" stroke="#fff" stroke-width="1.900" fill="none"/></svg><span>房屋绑定情况</span></div>
<div class="ob b" style="left:754.5px;top:318px;width:45px;height:17px;line-height:16.6px"><svg class="oi" viewBox="0 0 16 16"><path d="M0.8 8C2.6 4.8 5.200 3.400 8 3.400s5.400 1.400 7.200 4.600c-1.800 3.200-4.400 4.600-7.200 4.600S2.600 11.200 0.800 8z" stroke="#fff" stroke-width="2.100" fill="none"/><circle cx="8" cy="8" r="2.400" stroke="#fff" stroke-width="1.900" fill="none"/></svg><span>查看</span></div>
<div class="ob g" style="left:807.9px;top:318px;width:59.9px;height:17px;line-height:16.6px"><svg class="oi" viewBox="0 0 16 16"><path d="M0.8 8C2.6 4.8 5.200 3.400 8 3.400s5.400 1.400 7.200 4.600c-1.800 3.200-4.400 4.600-7.200 4.600S2.600 11.200 0.800 8z" stroke="#fff" stroke-width="2.100" fill="none"/><circle cx="8" cy="8" r="2.400" stroke="#fff" stroke-width="1.900" fill="none"/></svg><span>投票明细</span></div>
<div class="td c" style="left:1.1px;width:31.7px;top:363.05px">8</div>
<div class="td" style="left:39.1px;top:363.05px;max-width:116.1px">PJ202009041018451870</div>
<div class="td" style="left:163.2px;top:363.05px;max-width:95.1px">万科城市花园小区</div>
<div class="td" style="left:266.3px;top:363.05px;max-width:93.1px">万科城关于是否同意…</div>
<div class="td" style="left:367.4px;top:363.05px;max-width:93.1px">2020-09-08 09:00</div>
<div class="td" style="left:468.5px;top:363.05px;max-width:93.4px">2020-10-07 17:00</div>
<div class="td c" style="left:563px;width:101.4px;top:363.05px">结果公示结束</div>
<div class="ob b" style="left:670.7px;top:351.7px;width:74.5px;height:17px;line-height:16.6px"><svg class="oi" viewBox="0 0 16 16"><path d="M0.8 8C2.6 4.8 5.200 3.400 8 3.400s5.400 1.400 7.200 4.600c-1.800 3.200-4.400 4.600-7.200 4.600S2.600 11.200 0.800 8z" stroke="#fff" stroke-width="2.100" fill="none"/><circle cx="8" cy="8" r="2.400" stroke="#fff" stroke-width="1.900" fill="none"/></svg><span>房屋绑定情况</span></div>
<div class="ob b" style="left:754.5px;top:351.7px;width:45px;height:17px;line-height:16.6px"><svg class="oi" viewBox="0 0 16 16"><path d="M0.8 8C2.6 4.8 5.200 3.400 8 3.400s5.400 1.400 7.200 4.600c-1.800 3.200-4.400 4.600-7.200 4.600S2.600 11.200 0.800 8z" stroke="#fff" stroke-width="2.100" fill="none"/><circle cx="8" cy="8" r="2.400" stroke="#fff" stroke-width="1.900" fill="none"/></svg><span>查看</span></div>
<div class="ob g" style="left:807.9px;top:351.7px;width:59.9px;height:17px;line-height:16.6px"><svg class="oi" viewBox="0 0 16 16"><path d="M0.8 8C2.6 4.8 5.200 3.400 8 3.400s5.400 1.400 7.200 4.600c-1.800 3.200-4.400 4.600-7.200 4.600S2.600 11.200 0.800 8z" stroke="#fff" stroke-width="2.100" fill="none"/><circle cx="8" cy="8" r="2.400" stroke="#fff" stroke-width="1.900" fill="none"/></svg><span>投票明细</span></div>
<div class="ob b" style="left:670.7px;top:370.3px;width:60px;height:16.6px;line-height:16.2px"><svg class="oi" viewBox="0 0 16 16"><path d="M2.800 1.400h7l3.400 3.400v9.800H2.800z" stroke="#fff" stroke-width="1.900" fill="none" stroke-linejoin="round"/><path d="M9.600 1.600v3.600h3.400M5.200 8.200h5.600M5.200 11h5.600" stroke="#fff" stroke-width="1.500" fill="none"/></svg><span>表决结果</span></div>
<i class="sm" style="left:169.9px;top:42.7px;width:17px;height:15px"></i>
<i class="sm" style="left:310.4px;top:40.7px;width:9.5px;height:18px"></i>
<i class="sm" style="left:164.9px;top:74.7px;width:16px;height:17px"></i>
<i class="sm" style="left:307.9px;top:70.7px;width:24px;height:24px"></i>
<i class="sm" style="left:163.9px;top:114.7px;width:21px;height:20px"></i>
<i class="sm" style="left:305.9px;top:114.7px;width:24px;height:22px"></i>
<i class="sm" style="left:165.9px;top:172.7px;width:21px;height:14px"></i>
<i class="sm" style="left:302.9px;top:167.7px;width:18px;height:20px"></i>
<i class="sm" style="left:161.9px;top:224.2px;width:31px;height:13.5px"></i>
<i class="sm" style="left:301.4px;top:222.7px;width:12px;height:15px"></i>
<i class="sm" style="left:162.9px;top:274.7px;width:22px;height:18px"></i>
<i class="sm" style="left:294.9px;top:272.7px;width:9.5px;height:22px"></i>
<i class="sm" style="left:160.9px;top:317.7px;width:7px;height:17px"></i>
<i class="sm" style="left:179.4px;top:316.7px;width:10.5px;height:20px"></i>
<i class="sm" style="left:285.9px;top:316.7px;width:11px;height:20px"></i>
<i class="sm" style="left:188.4px;top:360.7px;width:29px;height:16px"></i>
<i class="sm" style="left:261.9px;top:360.7px;width:25.5px;height:15px"></i>
</div>
<!--/MAIN-->

<!-- page scrollbar + taskbar -->
<div class="abs" style="left:1076px;top:106.500px;width:4px;height:479px;background:#fdfdfd"></div><div class="abs" style="left:1076px;top:106.500px;width:4px;height:359.500px;background:#dcdddf;border-radius:0 0 2px 2px"></div>
<div id="task"><div class="abs" style="left:276px;top:0;width:27px;height:5px;background:#4d5f68"></div><div class="abs" style="left:1021px;top:3.400px;width:6px;height:1.600px;background:#c8ccd4"></div><div class="abs" style="left:1030px;top:3.400px;width:7px;height:1.600px;background:#c8ccd4"></div><div class="abs" style="left:1077px;top:0;width:1px;height:5px;background:#6b7386"></div></div>
<svg class="abs" style="left:374.300px;top:582.600px" width="5" height="2.600" viewBox="0 0 10 5"><path d="M0 0h10L5 5z" fill="#7d8287"/></svg>
</div>
</body>
</html>
